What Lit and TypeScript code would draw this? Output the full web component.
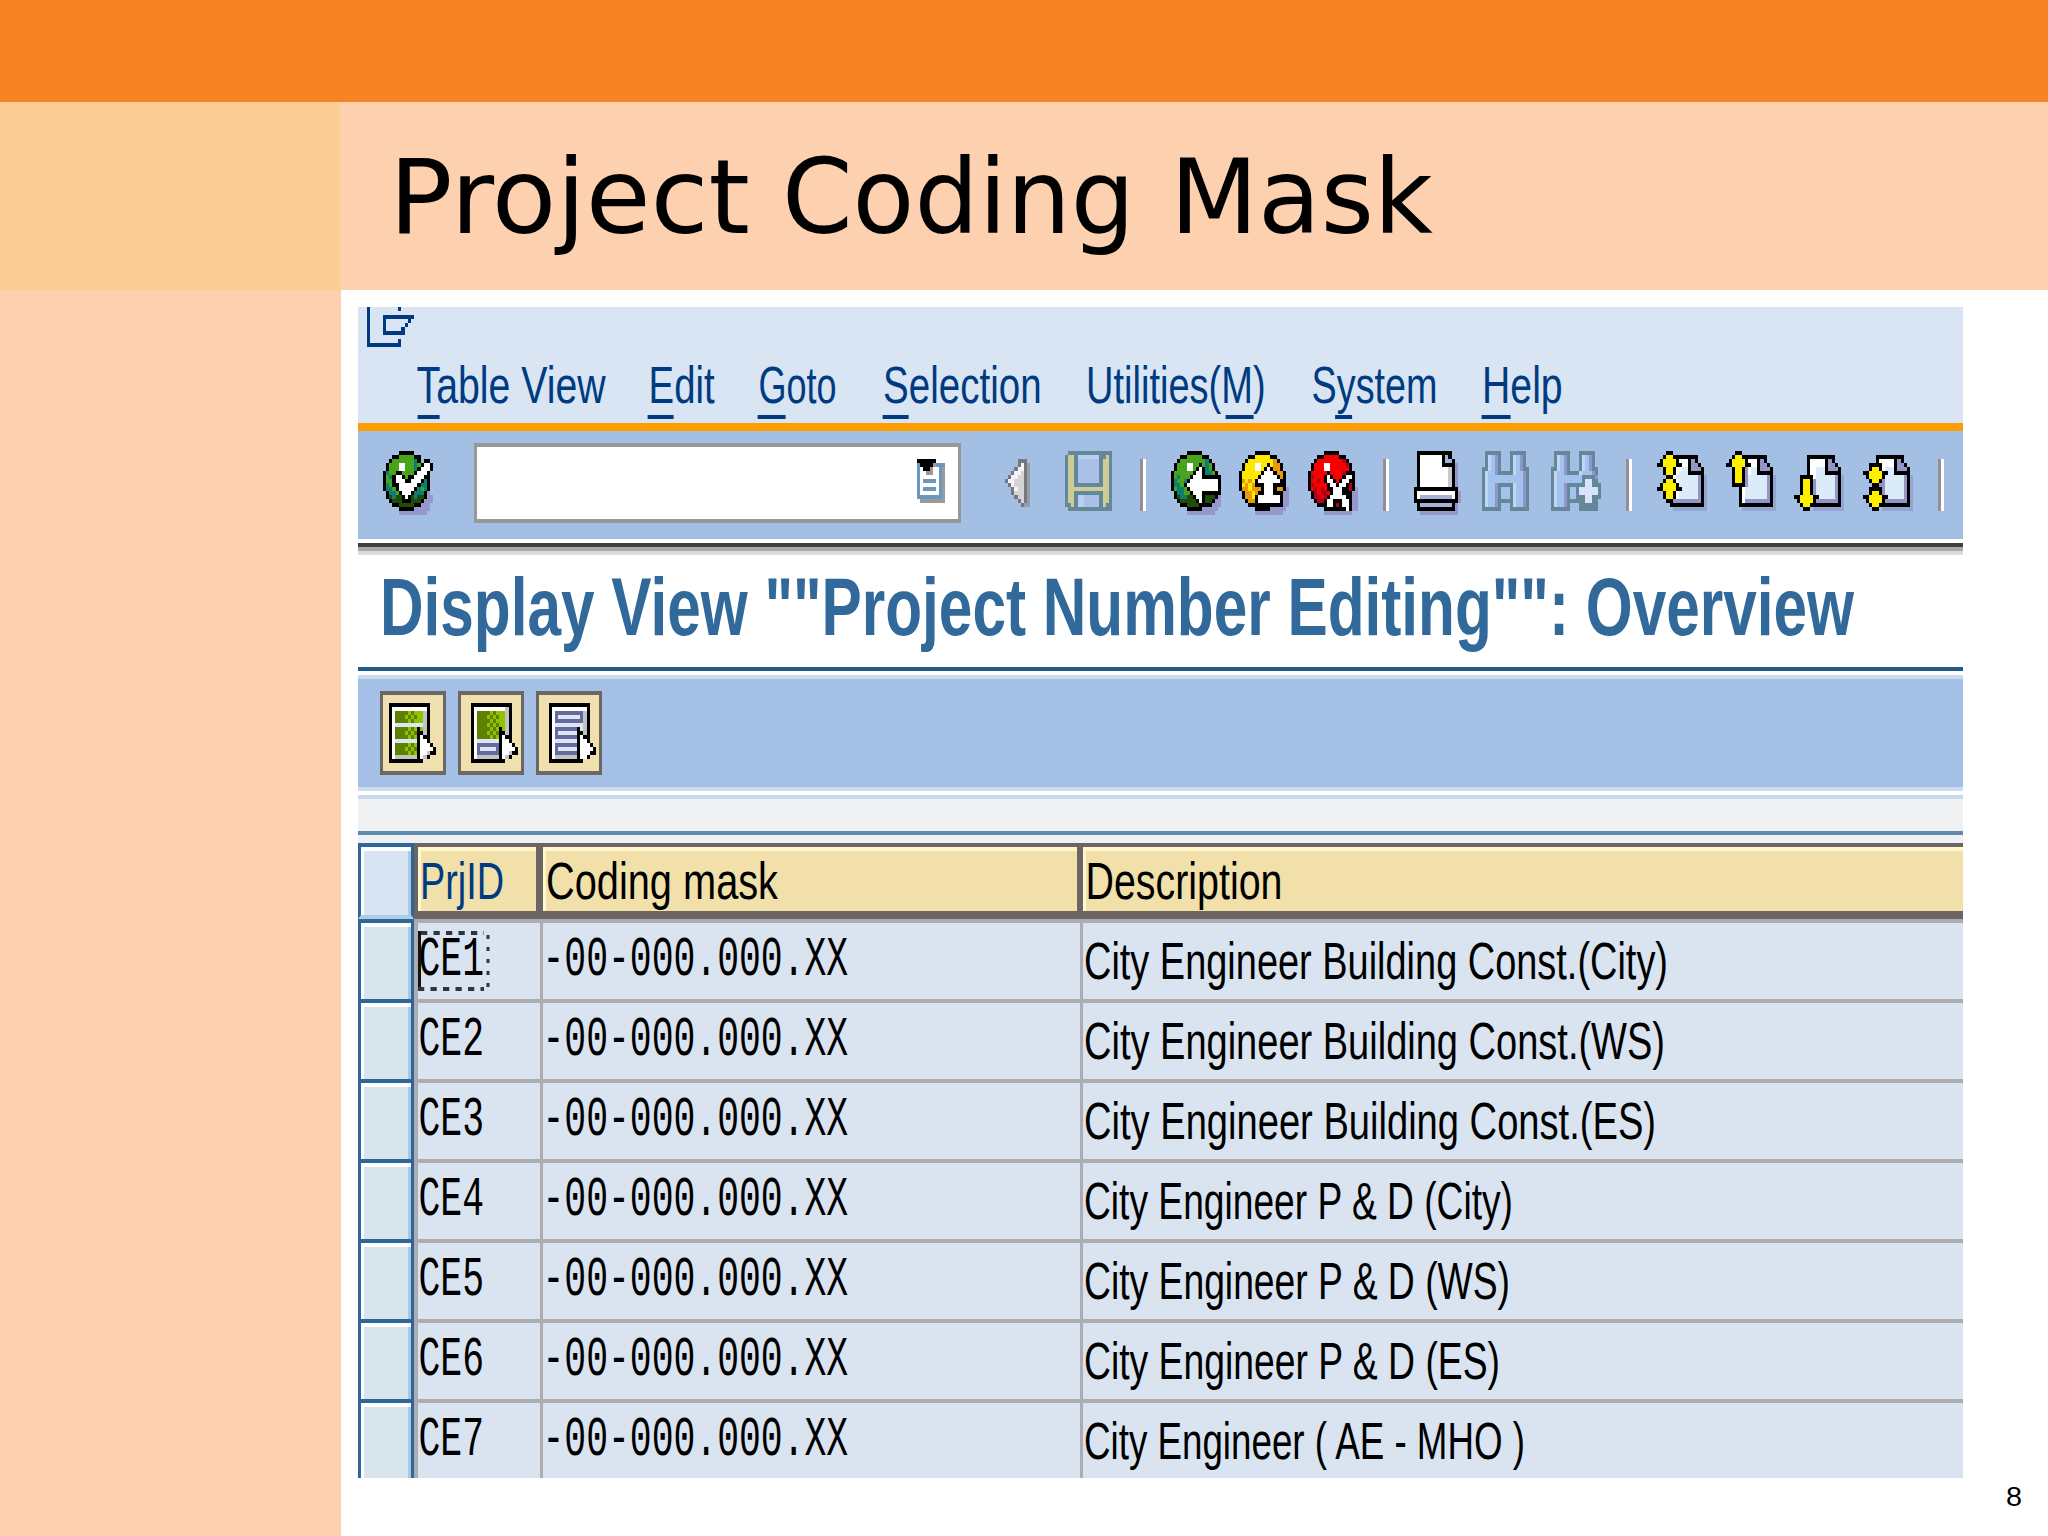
import { LitElement, html, svg, css } from "lit";
import { customElement } from "lit/decorators.js";

// One bitmap cell is taller than wide: 3.125 x 4 px.
const CW = 3.125;
const CH = 4;

type Palette = Record<string, string>;

const base: Palette = {
  k: "#000000", w: "#ffffff", s: "#9698cb", g: "#4aa31c", t: "#0b7f74", d: "#234a08",
};
const yellow: Palette = { ...base, y: "#ffe800", o: "#e79a0c" };
const red: Palette = { ...base, r: "#f80000", m: "#b3001c" };
const pages: Palette = { k: "#000000", w: "#ffffff", l: "#dcebf9", p: "#9396c4", s: "#93a6d2", y: "#fff000" };
const slate: Palette = { o: "#648799", b: "#a2c3ee", l: "#c0d6f5", p: "#9095cc", y: "#cdcc96", w: "#d9e4fa" };
const floppy: Palette = { ...slate, b: "#a9c1e8", l: "#b9cff2" };
const listing: Palette = { k: "#000000", w: "#ffffff", g: "#5f8000", h: "#8fc300", l: "#dbe6f7", n: "#c2c2c2", v: "#666a9e" };

const CHECK = [
  ".....kkkkk......", "...kkgggggkk....", "..kgggggggtk.kk.", ".kgggwwgggtgkwwk",
  ".kgggwwgggtkwwwk", "ktggkkggggkwwwk.", "kgtkwwkgkkwwwkk.", "kggkwwwkkwwwktk.",
  "ktgkkwwwwwwkttk.", "kttgkwwwwwktgtk.", ".kttgkwwwktttks.", ".kdtddkwkdtddkss",
  "..kdddkkkdddksss", "...kkdddddkksss.", ".....kkkkksssss.", ".....sssssssss..",
];
const CLIP = [
  "kkkkkk...", "bkkkknbbb", "bwkknwwbn", "bwwnnwwbn", "bwwwwwwbn", "bwbbbbwbn",
  "bwwwwwwbn", "bwbbbbwbn", "bwwwwwwbn", "bbbbbbbbn", ".nnnnnnnn",
];
const TRIANGLE = [
  "....xnn..", "....xwns.", "...xwwns.", "..xwwlns.", ".xwwllns.", "xwwlllns.",
  ".xwlllns.", "..xwllns.", "..xlllns.", "...xllns.", "....xlns.", ".....nss.",
];
const FLOPPY = [
  ".oooooooooooooo", "oyyolllllllooyo", "oyyobbbbbbboyyo", "oyyobbbbbbboyyo", "oyyobbbbbbboyyo",
  "oyyobbbbbbboyyo", "oyyobbbbbbboyyo", "oyyobbbbbbboyyo", "oyyoooooooooyyo", "oyyyyyyyyyyyyyo",
  "oyyoooooooooyyo", "oyyollbbbbboyyo", "oyyollbbbbboyyo", "ooyollbbbbboyoo", ".oooooooooooooo",
];
const BACK = [
  ".....kkkkk......", "...kkgggggkk....", "..kggggggggtk...", ".kgggwwggkgtgk..",
  ".kgggwwgkwktgk..", "kggggggkwwkttgk.", "kgtgggkwwwkkkkkk", "ktggtkwwwwwwwwwk",
  "kttgkwwwwwwwwwwk", "kgttgkwwwwwwwwwk", ".kttggkwwwkkkkkk", ".kdttddkwwkdddks",
  "..kdddddkwkddkss", "...kkddddkkkksss", ".....kkkkksssss.", ".....sssssssss..",
];
const UP = [
  ".....kkkkk......", "...kkyyyyykk....", "..kyyyyyyyyok...", ".kyyywwyykyook..",
  ".kyyywwykwkook..", "kyyyyyykwwwkook.", "kyyyyykwwwwwkok.", "koyoykwwwwwwwkk.",
  "kyoyokkkwwwkkkk.", "kooyoookwwwkooks", ".kooyokkwwwkkkss", ".kooykwwwwwwwkss",
  "..kookwwwwwwwkss", "...kkkkkkkkkkkss", ".....kkkkksssss.", ".....sssssssss..",
];
const CANCEL = [
  ".....kkkkk......", "...kkrrrrrkk....", "..krrrrrrrrmk...", ".krrrwwrrrrrmk..",
  ".krrrwwrrrrrrk..", "krrrrrkrrrrmkkk.", "kmrrrkwkrrrkwwk.", "krrmrkwwkrkwwkk.",
  "kmrrrrkwwkwwkmk.", "krmrmrkkwwwkkmks", ".kmrmmrkwwwkkkss", ".kmmrmkwwwwwkkss",
  "..kmmkwwkkkwwkss", "...kkkwwkmkwwkss", ".....kkkkkkkwkss", ".....sssssssss..",
];
const PRINT = [
  ".kkkkkkkkkkk....", ".kwwwwwwwkpk....", ".kwwwwwwwkppk...", ".kwwwwwwwkkkks..",
  ".kwwwwwwwwwlks..", ".kwwwwwwwwwlks..", ".kwwwwwwwwwlks..", ".kwwwwwwwwwlks..",
  ".kwwwwwwwwwlks..", "kkkkkkkkkkkkkk..", "kwwwwwwwwwwwwks.", "kwppppppppppwks.",
  "kkkkkkkkkkkkkks.", ".kppppppppppks..", ".kkkkkkkkkkkks..", "..ssssssssssss..",
];
const FIND = [
  ".ooooo...ooooo..", ".olbpo...olbpo..", ".olbpo...olbpo..", ".olbpo...olbpo..",
  "oolbpo...olbpoo.", "olbbpooooolbbpo.", "olbbbbbbbbbbbpo.", "olbbbbbbbbbbbpo.",
  "olbbpooooolbbpo.", "olbbpobbbolbbpo.", "olbbpobbbolbbpo.", "olbbpobbbolbbpo.",
  "olbbpooooolbbpo.", "olbbpo...olbbpo.", "oooooo...oooooo.",
];
const FIND_NEXT = [
  ".ooooo...ooooo..", ".olbpo...olbpo..", ".olbpo...olbpo..", ".olbpo...olbpo..",
  "oolbpo...olbpoo.", "olbbpoooolbbbpo.", "olbbbbbbbboooop.", "olbbbbbbbbowwoo.",
  "olbbpoooooowwooo", "olbbpobbowwwwwwo", "olbbpobbowwwwwwo", "olbbpobbooowwooo",
  "olbbpoooooowwoo.", "olbbpo...oooooo.", "oooooo...oooooo.",
];
const FIRST_PAGE = [
  "...kk...........", "..kyykkkkkkkk...", ".kyyyykwwwkpk...", "kkyyyykkwwkppk..",
  "..kyykwwllkpppk.", "..kyykwlllkkkkk.", "...kkwlllllllpks", "..kyykwllllllpks",
  ".kyyyykllllllpks", "kkyyyykklllllpks", "..kyykwllllllpks", "..kyykwllllllpks",
  "...kkpppppppppks", "....kkkkkkkkkkks", ".....sssssssssss",
];
const PREV_PAGE = [
  "...kk...........", "..kyykkkkkkkk...", ".kyyyykwwwkpk...", "kkyyyykkwwkppk..",
  "..kyykpwllkpppk.", "..kyykpwllkkkkk.", "..kyykpllllllpks", "..kyykpllllllpks",
  "..kkkkpllllllpks", "....kwlllllllpks", "....kwlllllllpks", "....kwlllllllpks",
  "....kwppppppppks", "....kkkkkkkkkkks", ".....sssssssssss",
];
const NEXT_PAGE = [
  "................", "....kkkkkkkkk...", "....kwwwwwkpk...", "....kwwwwwkppk..",
  "....kwwlllkpppk.", "....kwwlllkkkkk.", "..kkkkwllllllpks", "..kyykpllllllpks",
  "..kyykpllllllpks", "..kyykpllllllpks", "..kyykpllllllpks", "kkyyyykklllllpks",
  ".kyyyykpppppppks", "..kyykkkkkkkkkks", "...kk.ssssssssss",
];
const LAST_PAGE = [
  "................", "....kkkkkkkkk...", "....kwwwwwkpk...", "..kkkkwwwwkppk..",
  "..kyykwlllkpppk.", "kkyyyykkllkkkkk.", ".kyyyykllllllpks", "..kyykpllllllpks",
  "...kkppllllllpks", "..kkkkpllllllpks", "..kyykpllllllpks", "kkyyyykklllllpks",
  ".kyyyykpppppppks", "..kyykkkkkkkkkks", "...kk.ssssssssss",
];
const SELECT_ALL = [
  "kkkkkkkkkkkkk..", "kwwwwwwwwwwwk..", "kwgggghghhhnk..", "kwggghghghhnk..", "kwgggghghhhnk..",
  "kwlllllllllnk..", "kwgggghghkhnk..", "kwggghghgkknk..", "kwgggghghkwkk..", "kwlllllllkwwk..",
  "kwgggghghkwwwk.", "kwggghghgkwwwwk", "kwgggghghkwwnkk", "kwnnnnnnnkwnk..", "kkkkkkkkkkk....",
];
const SELECT_BLOCK = [
  "kkkkkkkkkkkkk..", "kwwwwwwwwwwnk..", "kwgggghghhhnk..", "kwggghghghhnk..", "kwgggghghhhnk..",
  "kwggghghghhnk..", "kwgggghghkhnk..", "kwggghghgkknk..", "kwgggghghkwkk..", "kwlllllllkwwk..",
  "kwvvvvvvvkwwwk.", "kwvlllllvkwwwwk", "kwvvvvvvvkwwnkk", "kwnnnnnnnkwnk..", "kkkkkkkkkkk....",
];
const DESELECT = [
  "kkkkkkkkkkkkk..", "kwwwwwwwwwwwk..", "kwvvvvvvvvvnk..", "kwvlllllllvnk..", "kwvvvvvvvvvnk..",
  "kwlllllllllnk..", "kwvvvvvvvklnk..", "kwvllllllkknk..", "kwvvvvvvvkwkk..", "kwlllllllkwwk..",
  "kwvvvvvvvkwwwk.", "kwvllllllkwwwwk", "kwvvvvvvvkwwwkk", "kwnnnnnnnkwwk..", "kkkkkkkkkkk....",
];
const SESSION = [
  "k.........k....", "k..............", "k....kkkkkkkkkk", "k....k.......k.", "k....k......k..",
  "k....k.....k...", "k....kkkkkkk...", "k..............", "k.........k....", "kkkkkkkkkkk....",
];

/** Draws a character grid as horizontal runs of coloured cells. */
function bitmap(rows: string[], palette: Palette, cls = "") {
  const cols = Math.max(...rows.map((r) => r.length));
  const runs: unknown[] = [];
  rows.forEach((row, y) => {
    let x = 0;
    while (x < row.length) {
      const c = row[x];
      let end = x + 1;
      while (end < row.length && row[end] === c) end++;
      if (palette[c]) {
        runs.push(svg`<rect x=${x} y=${y} width=${end - x} height="1" fill=${palette[c]}></rect>`);
      }
      x = end;
    }
  });
  return html`<svg class="bitmap ${cls}" width=${cols * CW} height=${rows.length * CH}
    viewBox="0 0 ${cols} ${rows.length}" preserveAspectRatio="none"
    shape-rendering="crispEdges" aria-hidden="true">${runs}</svg>`;
}

/** Horizontal condensation of each text style. */
const SQUEEZE: Record<string, number> = {
  "t-menu": 0.78, "t-cell": 0.78, "t-key": 0.78, "t-mono": 0.66, "t-title": 0.77,
  "t-heading": 1, "t-page": 1,
};

/** Text condensed to an exact width from a given left edge. */
function word(text: string, x: number, width: number, baseline: number, cls: string) {
  const k = SQUEEZE[cls];
  return svg`<text class=${cls} transform="translate(${x} ${baseline}) scale(${k} 1)"
    textLength=${width / k} lengthAdjust="spacingAndGlyphs">${text}</text>`;
}

function line(text: string, x: number, width: number, baseline: number, cls: string) {
  return html`<svg class="line" width=${x + width} height=${baseline}>${word(text, x, width, baseline, cls)}</svg>`;
}

// label, left edge, width, underline start, underline width
const MENU: [string, number, number, number, number][] = [
  ["Table View", 417, 189, 418, 22],
  ["Edit", 649, 66, 648, 26],
  ["Goto", 759, 78, 758, 28],
  ["Selection", 883.5, 158.5, 883, 26],
  ["Utilities(M)", 1086.5, 179.5, 1226, 28],
  ["System", 1312, 126, 1335.5, 17],
  ["Help", 1482.5, 80.5, 1482, 29],
];

const ROWS: [string, string, number][] = [
  ["CE1", "City Engineer Building Const.(City)", 584],
  ["CE2", "City Engineer Building Const.(WS)", 581],
  ["CE3", "City Engineer Building Const.(ES)", 572],
  ["CE4", "City Engineer P & D (City)", 429],
  ["CE5", "City Engineer P & D (WS)", 426],
  ["CE6", "City Engineer P & D (ES)", 416],
  ["CE7", "City Engineer ( AE - MHO )", 441],
];

@customElement("app-root")
export class AppRoot extends LitElement {
  static styles = css`
    :host { display: block; }
    * { box-sizing: border-box; }
    svg { display: block; flex: none; overflow: visible; }
    .slide {
      width: 2048px; height: 1536px; overflow: hidden; background: #fff;
      display: grid; grid-template-columns: 341px 1fr; grid-template-rows: 102px 188px 1fr;
    }
    .top { grid-column: 1 / 3; background: #f68424; }
    .corner { background: #fccd95; border-right: 1px solid #fcd0a4; }
    .heading { background: #fdd0b0; }
    .side { background: #fdd0b0; }
    .main { display: flex; align-items: flex-start; padding: 17px 0 0 17px; }
    .t-heading { font: 102.5px "DejaVu Sans", sans-serif; fill: #000; }
    .t-page { font: 28px "Liberation Sans", Arial, sans-serif; fill: #000; }
    .t-menu { font: 52px "Liberation Sans", Arial, sans-serif; fill: #003b82; }
    .t-cell { font: 52px "Liberation Sans", Arial, sans-serif; fill: #000; }
    .t-key { font: 52px "Liberation Sans", Arial, sans-serif; fill: #003b82; }
    .t-mono { font: 55px "Liberation Mono", "Courier New", monospace; fill: #000; }
    .t-title { font: bold 81px "Liberation Sans", Arial, sans-serif; fill: #31699a; }

    .window { width: 1605px; height: 1171px; overflow: hidden; flex: none; }
    .menubar { height: 116px; background: #d9e5f2; padding-left: 9.4px; }
    .accent { height: 8px; background: #ff9c00; }
    .toolbar {
      height: 108px; background: #a3bfe3; padding-left: 25px;
      display: flex; align-items: flex-start;
    }
    .toolbar > .bitmap, .group { margin-top: 20px; }
    .group { flex: none; display: flex; align-items: flex-start; gap: 18.67px; }
    .field {
      flex: none; width: 487px; height: 80px; margin: 12px 44px 0 41px; background: #fff;
      border: solid #989898; border-width: 4px 3px; display: flex; justify-content: flex-end;
      padding: 12px 13px 0 0;
    }
    .toolbar > .triangle { margin-top: 28px; }
    .toolbar > .floppy { margin-left: 32px; margin-right: 2.5px; }
    .sep {
      flex: none; width: 6px; height: 52px; margin: 28px 25px 0;
      border-left: 3px solid #948f92; background: #fff;
    }
    .sep:last-child { margin-right: 0; }
    .shade { height: 16px; background: linear-gradient(#fff 4px, #3f3f41 4px 8px, #a9a8aa 8px 12px, #dcdcde 12px); }
    .titlebar { height: 112px; }
    .rule { height: 12px; background: linear-gradient(#225a88 4px, #fff 4px 8px, #c9dbef 8px); }
    .buttons { height: 108px; background: #a4c0e7; padding: 12px 0 0 22px; display: flex; gap: 12px; }
    .button {
      width: 66px; height: 84px; background: #f0e0ae; border: solid #6b6863; border-width: 4px 3px;
      padding: 8px 0 0 6.4px;
    }
    .button.wide { padding-left: 9.5px; }
    .strip { height: 12px; background: linear-gradient(#cddcef 4px, #fff 4px 8px, #c8d9ec 8px); }
    .blank { height: 32px; background: #f0f1f3; }
    .edge { height: 12px; background: linear-gradient(#5f8aad 4px, #edf0f4 4px); }

    .table { display: grid; grid-template-columns: 56px 3.5px 122px 3px 537px 3px 1fr; }
    .sel {
      border: solid #30659a; border-width: 4px 3px 0 3px; background: #d9e5ec;
      box-shadow: inset 3px 4px 0 #fff, inset -3px 0 0 #a6cae2; height: 80px;
    }
    .sel.head { height: 76px; background: #d8e4f1; border-bottom: 4px solid #a9cde3; }
    .headline {
      grid-column: 2 / 8; height: 76px; background: #6b6563;
      padding: 4px 0 8px 3.5px; display: grid;
      grid-template-columns: 118.5px 534px 1fr; grid-template-rows: 64px; column-gap: 6.5px;
    }
    .hcell { background: #f1e0aa; box-shadow: inset 3px 4px 0 #fff8cc; }
    .vline { background: #adadb0; }
    .cell { height: 80px; background: #d9e4f0; border-top: 4px solid #adadb0; }
    .focus { position: relative; }
    .marquee { position: absolute; left: 0; top: 8px; }
    .pager { display: flex; align-self: flex-end; padding-bottom: 30px; }
  `;

  private sep() {
    return html`<div class="sep"></div>`;
  }

  render() {
    return html`<div class="slide">
      <div class="top"></div>
      <div class="corner"></div>
      <div class="heading">
        <svg width="1140" height="131">
          ${word("Project", 48, 361, 131, "t-heading")}
          ${word("Coding", 441, 353, 131, "t-heading")}
          ${word("Mask", 829, 263, 131, "t-heading")}
        </svg>
      </div>
      <div class="side"></div>
      <div class="main">
        <div class="window">
          <div class="menubar">
            <svg width="1590" height="116" viewBox="367.4 307 1590 116">
              ${SESSION.map((row, y) => [...row].map((c, x) => c === "k"
                ? svg`<rect x=${367.4 + x * CW} y=${307 + y * CH} width=${CW} height=${CH}
                    fill="#003b82" shape-rendering="crispEdges"></rect>` : null))}
              ${MENU.map(([label, x, w, ux, uw]) => svg`
                ${word(label, x, w, 403, "t-menu")}
                <rect x=${ux} y="415" width=${uw} height="4" fill="#003b82"></rect>`)}
            </svg>
          </div>
          <div class="accent"></div>
          <div class="toolbar">
            ${bitmap(CHECK, base)}
            <div class="field">${bitmap(CLIP, { k: "#000", w: "#fff", b: "#6b96bf", n: "#9a9a9a" })}</div>
            ${bitmap(TRIANGLE, { x: "#74777d", w: "#f4f4f4", l: "#d3d4d8", n: "#77767a", s: "#979cab" }, "triangle")}
            ${bitmap(FLOPPY, floppy, "floppy")}
            ${this.sep()}
            <div class="group">${bitmap(BACK, base)}${bitmap(UP, yellow)}${bitmap(CANCEL, red)}</div>
            ${this.sep()}
            <div class="group">
              ${bitmap(PRINT, { ...base, l: "#c9c9cc", p: "#a5b1d6" })}${bitmap(FIND, slate)}${bitmap(FIND_NEXT, slate)}
            </div>
            ${this.sep()}
            <div class="group">
              ${bitmap(FIRST_PAGE, pages)}${bitmap(PREV_PAGE, pages)}${bitmap(NEXT_PAGE, pages)}${bitmap(LAST_PAGE, pages)}
            </div>
            ${this.sep()}
          </div>
          <div class="shade"></div>
          <div class="titlebar">${line('Display View ""Project Number Editing"": Overview', 22, 1474, 80, "t-title")}</div>
          <div class="rule"></div>
          <div class="buttons">
            <div class="button">${bitmap(SELECT_ALL, listing)}</div>
            <div class="button wide">${bitmap(SELECT_BLOCK, listing)}</div>
            <div class="button wide">${bitmap(DESELECT, listing)}</div>
          </div>
          <div class="strip"></div>
          <div class="blank"></div>
          <div class="edge"></div>
          <div class="table">
            <div class="sel head"></div>
            <div class="headline">
              <div class="hcell">${line("PrjID", 2, 84, 52, "t-key")}</div>
              <div class="hcell">${line("Coding mask", 3, 232, 52, "t-cell")}</div>
              <div class="hcell">${line("Description", 2.5, 197, 52, "t-cell")}</div>
            </div>
            ${ROWS.map(([id, text, width], i) => html`
              <div class="sel"></div>
              <div class="vline"></div>
              <div class="cell focus">
                ${line(id, 0.5, 65.5, 52, "t-mono")}
                ${i === 0 ? html`<svg class="marquee" width="72" height="60">
                  <path d="M1.5 0V60" stroke="#14140c" stroke-width="3"></path>
                  <path d="M3 2H66M0 58H66" fill="none" stroke="#2e3440" stroke-width="4" stroke-dasharray="6.25 6.25"></path>
                  <path d="M70 4V56" stroke="#2e3440" stroke-width="3" stroke-dasharray="4 8"></path>
                </svg>` : null}
              </div>
              <div class="vline"></div>
              <div class="cell">${line("-00-000.000.XX", -0.5, 305.7, 52, "t-mono")}</div>
              <div class="vline"></div>
              <div class="cell">${line(text, 1, width, 56, "t-cell")}</div>`)}
          </div>
        </div>
        <div class="pager">${line("8", 43, 16, 1, "t-page")}</div>
      </div>
    </div>`;
  }
}
